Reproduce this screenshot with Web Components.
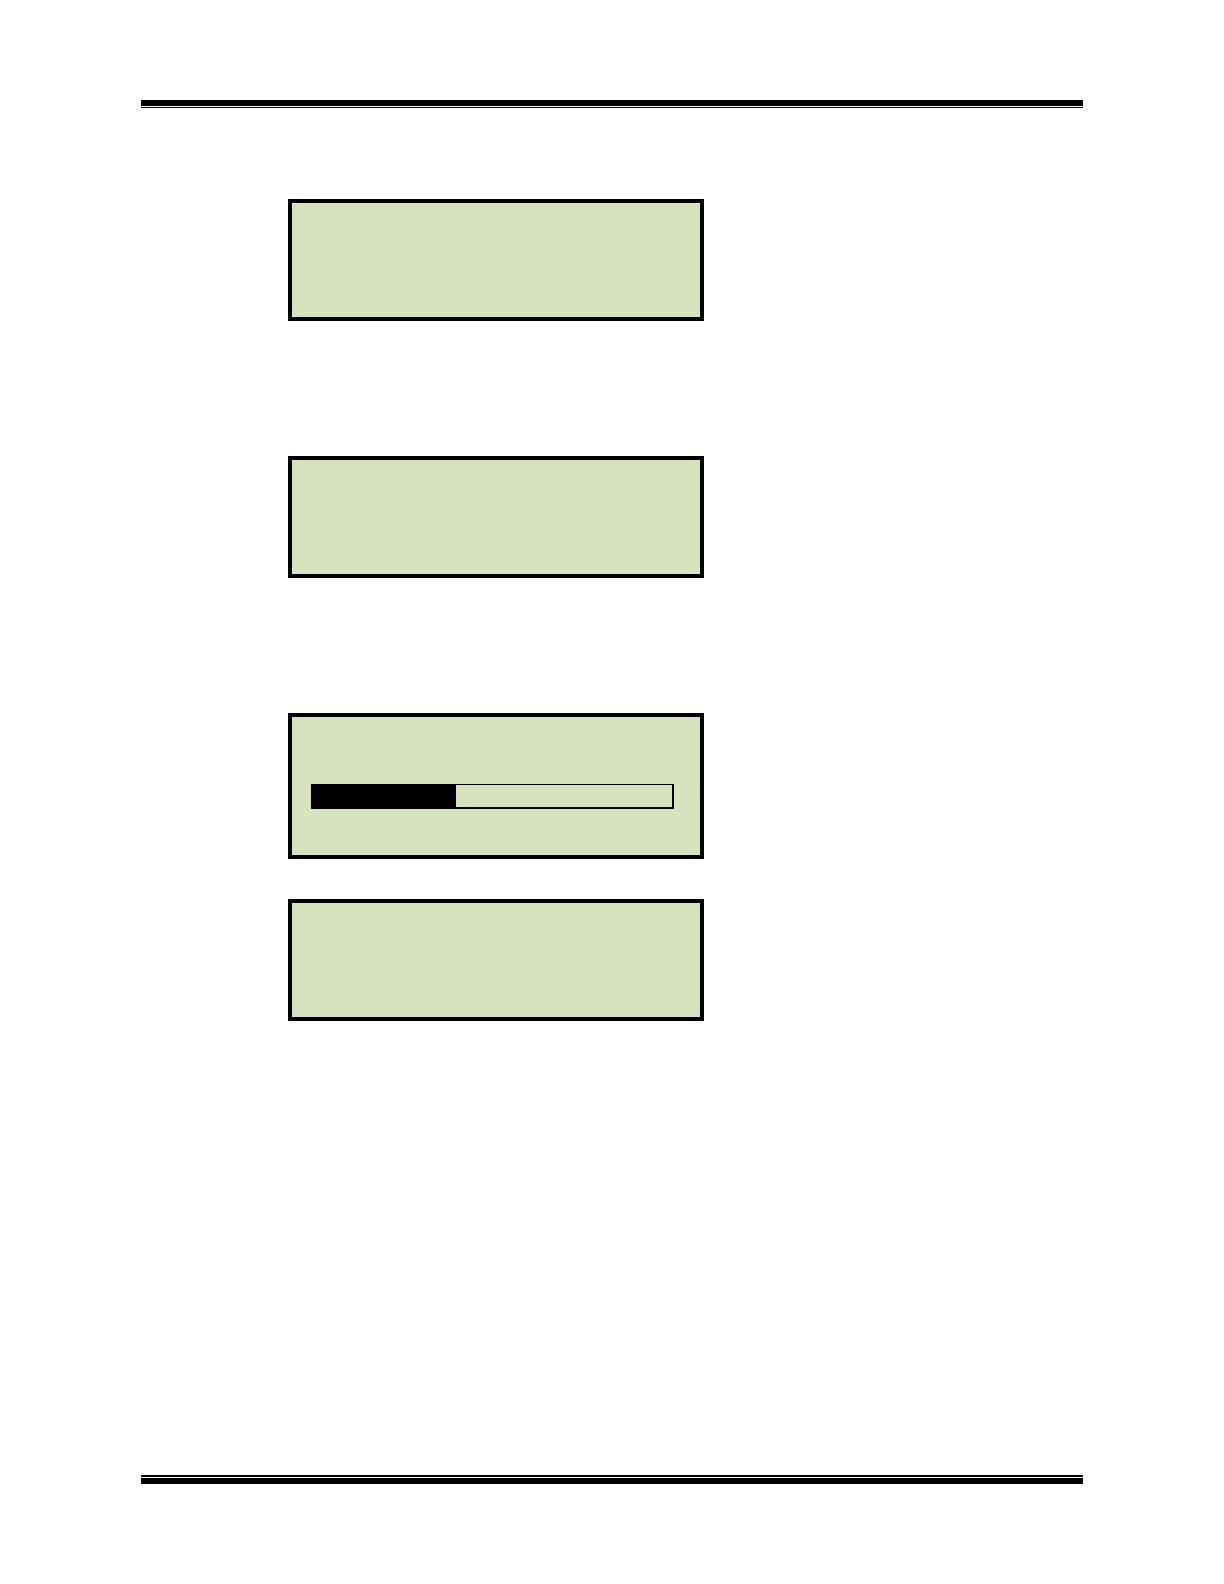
<!DOCTYPE html>
<html lang="en">
<head>
<meta charset="utf-8">
<meta name="viewport" content="width=device-width, initial-scale=1">
<title>Display screens</title>
<style>
    body{
        margin:0;
        background-color: #fff;
        font-family: "Liberation Sans", sans-serif;
    }
</style>
</head>
<body>
<manual-page>
    <lcd-group>
        <lcd-screen></lcd-screen>
    </lcd-group>
    <lcd-group>
        <lcd-screen></lcd-screen>
    </lcd-group>
    <lcd-group>
        <lcd-screen>
            <lcd-progress value="40"></lcd-progress>
        </lcd-screen>
        <lcd-screen></lcd-screen>
    </lcd-group>
</manual-page>

<script>
const pageTemplate = document.createElement('template');
pageTemplate.innerHTML = `
    <style>
        :host{
            display: flex;
            flex-direction: column;
            box-sizing: border-box;
            min-height: 100vh;
            padding: 100px 141px;
        }

        /* thick and thin rule pair */
        header{
            height: 1px;
            border-top: 6px solid #000;
            border-bottom: 1px solid #000;
        }

        footer{
            height: 1px;
            border-top: 2px solid #000;
            border-bottom: 6px solid #000;
        }

        main{
            display: flex;
            flex: 1;
            flex-direction: column;
            gap: 135px;
            padding: 91px 0 91px 147px;
        }
    </style>
    <header></header>
    <main><slot></slot></main>
    <footer></footer>
`;

const groupTemplate = document.createElement('template');
groupTemplate.innerHTML = `
    <style>
        :host{
            display: flex;
            flex-direction: column;
            gap: 40px;
        }
    </style>
    <slot></slot>
`;

const screenTemplate = document.createElement('template');
screenTemplate.innerHTML = `
    <style>
        :host{
            display: block;
            box-sizing: border-box;
            width: 100%;
            max-width: 416px;
            min-height: 122px;
            border: 4px solid #000;
            background-color: #d7e3bc;
        }
    </style>
    <slot></slot>
`;

const progressTemplate = document.createElement('template');
progressTemplate.innerHTML = `
    <style>
        :host{
            display: block;
            padding: 67px 26px 46px 19px;
        }

        progress{
            display: block;
            appearance: none;
            box-sizing: border-box;
            width: 100%;
            height: 25px;
            border: solid #000;
            border-width: 1px 2px 2px 1px;
            background-color: transparent;
        }

        progress::-webkit-progress-bar{
            background-color: transparent;
        }

        progress::-webkit-progress-value{
            background-color: #000;
        }
    </style>
    <progress max="100" aria-label="Progress"></progress>
`;

class ManualPage extends HTMLElement {
    constructor() {
        super();
        this.attachShadow({mode: 'open'});
        this.shadowRoot.appendChild(pageTemplate.content.cloneNode(true));
    }
}

class LcdGroup extends HTMLElement {
    constructor() {
        super();
        this.attachShadow({mode: 'open'});
        this.shadowRoot.appendChild(groupTemplate.content.cloneNode(true));
    }
}

class LcdScreen extends HTMLElement {
    constructor() {
        super();
        this.attachShadow({mode: 'open'});
        this.shadowRoot.appendChild(screenTemplate.content.cloneNode(true));
    }
}

class LcdProgress extends HTMLElement {
    static get observedAttributes() {
        return ['value'];
    }

    constructor() {
        super();
        this.attachShadow({mode: 'open'});
        this.shadowRoot.appendChild(progressTemplate.content.cloneNode(true));
    }

    attributeChangedCallback(name, oldValue, newValue) {
        this.shadowRoot.querySelector('progress').value = Number(newValue);
    }
}

window.customElements.define('manual-page', ManualPage);
window.customElements.define('lcd-group', LcdGroup);
window.customElements.define('lcd-screen', LcdScreen);
window.customElements.define('lcd-progress', LcdProgress);
</script>
</body>
</html>
